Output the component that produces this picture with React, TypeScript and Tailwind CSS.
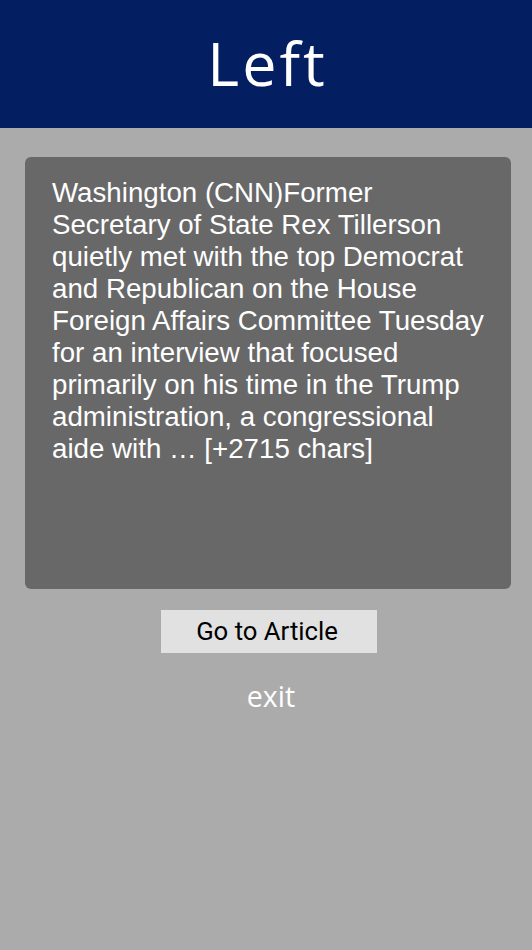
export default function App() {
    const content =
        'Washington (CNN)Former Secretary of State Rex Tillerson quietly met with the top Democrat and Republican on the House Foreign Affairs Committee Tuesday for an interview that focused primarily on his time in the Trump administration, a congressional aide with … [+2715 chars]';

    return (
        <div className="min-h-[950px] bg-[#ababab] flex flex-col items-start">
            <header className="w-full h-[128px] bg-[#041e62] flex items-center justify-center">
                <h1 className="ml-[3px] text-[61px] leading-none text-white tracking-[3px] font-['Open_Sans',sans-serif] pb-1">Left</h1>
            </header>

            <div className="ml-[25px] w-[486px] h-[432px] mt-[29px] bg-[#686868] rounded-md pl-[27px] pt-[20px]">
                <p className="w-[436px] text-white text-[27.7px] leading-[32px] font-['Liberation_Sans',Arial,sans-serif]">{content}</p>
            </div>

            <button className="ml-[161px] mt-[21px] w-[216px] h-[43px] bg-[#e1e1e1] text-black text-[25.7px] font-['Roboto',sans-serif] pr-[4px]">
                Go to Article
            </button>

            <div className="self-center ml-[10px] mt-[22px] text-white text-[28.5px] font-['Open_Sans',sans-serif]">exit</div>
        </div>
    );
}
